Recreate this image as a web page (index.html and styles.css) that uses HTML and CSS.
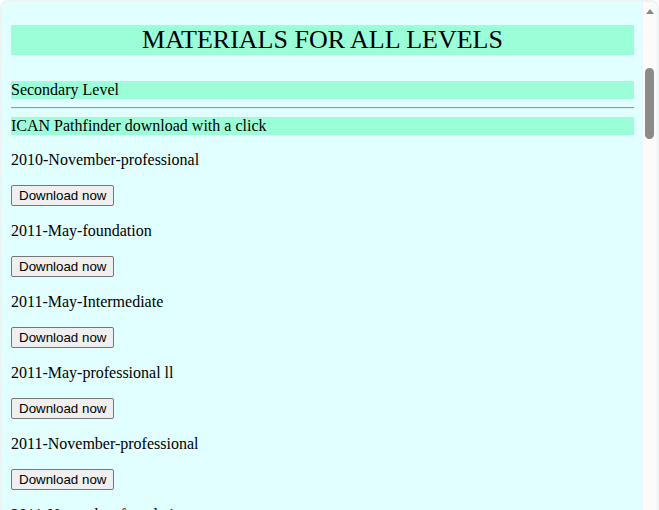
FILE: index.html
```html
<!DOCTYPE html>
<html lang="en">
<head>
<meta charset="utf-8">
<title>Materials for all levels</title>
<link rel="stylesheet" href="styles.css">
</head>
<body>
<div class="window">
  <div class="viewport">
    <h1 class="title">MATERIALS FOR ALL LEVELS</h1>
    <p class="band">Secondary Level</p>
    <hr class="rule">
    <p class="band band-last">ICAN Pathfinder download with a click</p>
    <div class="item">
      <p class="item-name">2010-November-professional</p>
      <button class="dl" type="button">Download now</button>
    </div>
    <div class="item">
      <p class="item-name">2011-May-foundation</p>
      <button class="dl" type="button">Download now</button>
    </div>
    <div class="item">
      <p class="item-name">2011-May-Intermediate</p>
      <button class="dl" type="button">Download now</button>
    </div>
    <div class="item">
      <p class="item-name">2011-May-professional ll</p>
      <button class="dl" type="button">Download now</button>
    </div>
    <div class="item">
      <p class="item-name">2011-November-professional</p>
      <button class="dl" type="button">Download now</button>
    </div>
    <div class="item">
      <p class="item-name">2011-November-foundation</p>
      <button class="dl" type="button">Download now</button>
    </div>
  </div>
  <div class="scrollbar">
    <span class="arrow"></span>
    <span class="thumb"></span>
  </div>
</div>
</body>
</html>
```

FILE: styles.css
```css
html, body {
  margin: 0;
  padding: 0;
  background: #ffffff;
}

body {
  width: 659px;
  height: 510px;
  overflow: hidden;
  font-family: "Liberation Serif", "Times New Roman", serif;
  color: #000;
}

.window {
  box-sizing: border-box;
  width: 659px;
  height: 510px;
  display: flex;
  border: 2px solid #eef4f4;
  border-bottom: none;
  border-radius: 8px 8px 0 0;
  overflow: hidden;
}

.viewport {
  flex: 1;
  min-width: 0;
  overflow: hidden;
  background: #e2ffff;
  padding: 23px 8px 0 9px;
}

.title {
  margin: 0 0 26px;
  background: #9cfdd9;
  font-size: 26px;
  font-weight: normal;
  line-height: 30px;
  text-align: center;
}

.band {
  margin: 0;
  background: #9cfdd9;
  font-size: 16px;
  line-height: 18px;
}

.band-last {
  margin-bottom: 16px;
}

.rule {
  margin: 8px 0;
  height: 0;
  border: none;
  border-top: 1px solid #9a9a9a;
  border-bottom: 1px solid #d8eeee;
}

.item {
  display: flex;
  flex-direction: column;
  align-items: flex-start;
  padding-bottom: 16px;
}

.item-name {
  margin: 0 0 16px;
  font-size: 16px;
  line-height: 18px;
}

.dl {
  box-sizing: border-box;
  height: 21px;
  margin: 0;
  padding: 0 7px;
  background: #efefef;
  border: 1px solid #767676;
  border-radius: 2px;
  font-family: "Liberation Sans", Arial, sans-serif;
  font-size: 13.33px;
  line-height: 19px;
  color: #000;
}

.scrollbar {
  position: relative;
  width: 14px;
  flex: none;
  background: #fbfbfb;
  border-left: 1px solid #f0f4f4;
}

.arrow {
  position: absolute;
  top: 7px;
  left: 3px;
  width: 0;
  height: 0;
  border-left: 4px solid transparent;
  border-right: 4px solid transparent;
  border-bottom: 5px solid #8a8a8a;
}

.thumb {
  position: absolute;
  top: 66px;
  left: 2px;
  width: 9px;
  height: 71px;
  border-radius: 5px;
  background: #8b8b8b;
}
```
